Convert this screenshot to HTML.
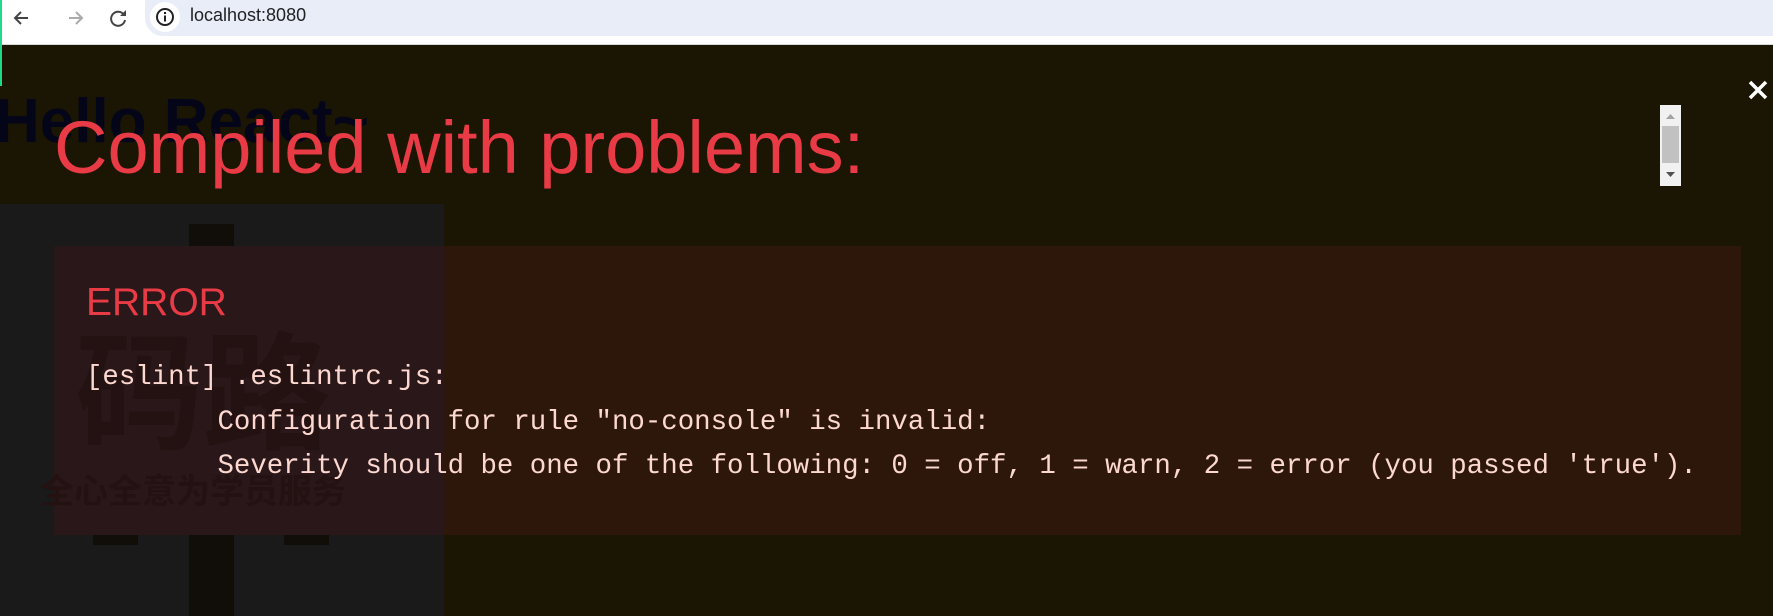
<!DOCTYPE html>
<html><head><meta charset="utf-8"><style>
*{margin:0;padding:0;box-sizing:border-box}
html,body{width:1773px;height:616px;overflow:hidden;background:#1b1503;font-family:"Liberation Sans","Noto Sans CJK SC",sans-serif}
.bar{position:absolute;left:0;top:0;width:1773px;height:45px;background:#fff;border-bottom:1px solid #d8d8d8}
.pill{position:absolute;left:145px;top:0;width:1640px;height:36px;background:#e9edf7;border-radius:0 0 0 18px}
.url{position:absolute;left:190px;top:5px;font-size:18px;color:#202124}
.abs{position:absolute}
.code{font-family:"Liberation Mono",monospace;font-size:27.4px;color:#fcd8d0;white-space:pre;line-height:44.5px}
</style></head><body>
<div class="bar">
<div class="pill"></div>
<svg class="abs" style="left:10px;top:4px" width="120" height="28" viewBox="0 0 120 28">
<path d="M18 14H5M11 8l-6 6 6 6" stroke="#444" stroke-width="2" fill="none"/>
<path d="M59 14h13M66 8l6 6-6 6" stroke="#aaa" stroke-width="2" fill="none"/>
<path d="M114 11a7 7 0 1 0 1 5" stroke="#444" stroke-width="2" fill="none"/><path d="M116 6v6h-6z" fill="#444"/>
</svg>
<div class="abs" style="left:150px;top:2px;width:30px;height:30px;border-radius:50%;background:#fff"></div>
<svg class="abs" style="left:155px;top:7px" width="20" height="20" viewBox="0 0 20 20"><circle cx="10" cy="10" r="8" stroke="#222" stroke-width="2" fill="none"/><rect x="9" y="8.5" width="2" height="6" fill="#222"/><rect x="9" y="5" width="2" height="2" fill="#222"/></svg>
<div class="url">localhost:8080</div>
</div>
<div class="abs" style="left:0;top:0;width:2px;height:86px;background:#1ed98a"></div>
<div class="abs" style="left:-5px;top:86px;font-size:62px;font-weight:bold;color:#05051a;white-space:nowrap">Hello React~</div>
<div class="abs" style="left:0;top:204px;width:444px;height:412px;background:#1a1a1a"></div>
<div class="abs" style="left:189px;top:224px;width:45px;height:392px;background:#110e09"></div>
<div class="abs" style="left:93px;top:535px;width:45px;height:10px;background:#110e09"></div>
<div class="abs" style="left:284px;top:535px;width:45px;height:10px;background:#110e09"></div>
<div class="abs" style="left:54px;top:246px;width:1687px;height:289px;background:#2c170a"></div>
<div class="abs" style="left:54px;top:246px;width:390px;height:289px;background:#2a1719"></div>
<div class="abs" style="left:75px;top:320px;font-size:128px;font-weight:bold;color:#241212;font-family:'Noto Sans CJK SC',sans-serif;line-height:1">码路</div>
<div class="abs" style="left:40px;top:472px;font-size:34px;font-weight:bold;color:#241212;font-family:'Noto Sans CJK SC',sans-serif;line-height:1;white-space:nowrap">全心全意为学员服务</div>
<div class="abs" style="left:54px;top:107px;font-size:74px;color:#e83b46;white-space:nowrap;line-height:1.1">Compiled with problems:</div>
<div class="abs" style="left:86px;top:282px;font-size:39px;color:#e83b46;line-height:1.1">ERROR</div>
<div class="abs code" style="left:86px;top:356px">[eslint] .eslintrc.js:
        Configuration for rule "no-console" is invalid:
        Severity should be one of the following: 0 = off, 1 = warn, 2 = error (you passed 'true').</div>
<div class="abs" style="left:1660px;top:105px;width:21px;height:81px;background:#f1f1f1"></div>
<div class="abs" style="left:1662px;top:126px;width:17px;height:37px;background:#c1c1c1"></div>
<svg class="abs" style="left:1660px;top:105px" width="21" height="81"><path d="M6 14l4.5-5 4.5 5z" fill="#a3a3a3"/><path d="M6 67l4.5 5 4.5-5z" fill="#505050"/></svg>
<svg class="abs" style="left:1748px;top:80px" width="20" height="20"><path d="M2 2l16 16M18 2L2 18" stroke="#fff" stroke-width="3.5"/></svg>
</body></html>
